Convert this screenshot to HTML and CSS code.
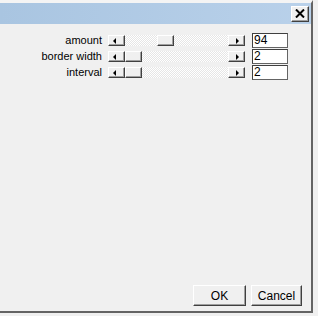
FILE: index.html
```html
<!DOCTYPE html>
<html lang="en">
  <head>
    <meta charset="utf-8" />
    <title>Settings</title>
    <link rel="stylesheet" href="styles.css">
  </head>
  <body>
    <div class="window">
      <div class="titlebar">
        <button class="close">
          <svg width="10" height="9" viewBox="0 0 10 9"><path d="M1 0.5 L9 8.5 M9 0.5 L1 8.5" stroke="#000" stroke-width="2"/></svg>
        </button>
      </div>

      <div class="content">
        <div class="rows">
          <label>amount</label>
          <div class="scroll">
            <span class="arrow left"></span>
            <span class="track"><span class="thumb" style="margin-left: 32px"></span></span>
            <span class="arrow right"></span>
          </div>
          <input type="text" value="94" />

          <label>border width</label>
          <div class="scroll">
            <span class="arrow left"></span>
            <span class="track"><span class="thumb"></span></span>
            <span class="arrow right"></span>
          </div>
          <input type="text" value="2" />

          <label>interval</label>
          <div class="scroll">
            <span class="arrow left"></span>
            <span class="track"><span class="thumb"></span></span>
            <span class="arrow right"></span>
          </div>
          <input type="text" value="2" />
        </div>
      </div>

      <div class="footer">
        <button class="btn ok">OK</button>
        <button class="btn">Cancel</button>
      </div>
    </div>
  </body>
</html>
```

FILE: styles.css
```css
body {
  margin: 0;
  background: #f0f0f0;
  font-family: "Liberation Sans", Arial, sans-serif;
  font-size: 11px;
}

.window {
  width: 313px;
  height: 313px;
  border-right: 2px solid #646464;
  border-bottom: 2px solid #646464;
  border-top: 3px solid #f4f4f4;
  box-sizing: border-box;
  display: flex;
  flex-direction: column;
  background: #f0f0f0;
}

.titlebar {
  height: 21px;
  background: linear-gradient(to right, #a9c5e1, #b9d1ea);
  display: flex;
  justify-content: flex-end;
  align-items: center;
  padding-right: 2px;
}

.close {
  width: 18px;
  height: 16px;
  padding: 0;
  background: #f0f0f0;
  border: 1px solid;
  border-color: #fff #404040 #404040 #fff;
  box-shadow: inset -1px -1px 0 #a0a0a0;
  display: flex;
  align-items: center;
  justify-content: center;
}

.content {
  flex: 1;
  padding-top: 9px;
}

.rows {
  display: grid;
  grid-template-columns: 102px 137px 36px;
  grid-auto-rows: 14px;
  column-gap: 6px;
  row-gap: 2px;
  align-items: center;
}

label {
  text-align: right;
  color: #000;
  line-height: 14px;
}

.scroll {
  display: flex;
  height: 11px;
}

.arrow,
.thumb {
  box-sizing: border-box;
  width: 17px;
  height: 11px;
  background: #f0f0f0;
  border: 1px solid;
  border-color: #fff #404040 #404040 #fff;
  box-shadow: inset -1px -1px 0 #a0a0a0;
  position: relative;
  flex: none;
}

.arrow::after {
  content: "";
  position: absolute;
  top: 2px;
  border: 3px solid transparent;
}

.arrow.left::after {
  left: 4px;
  border-right: 3px solid #000;
  border-left-width: 0;
}

.arrow.right::after {
  left: 7px;
  border-left: 3px solid #000;
  border-right-width: 0;
}

.track {
  flex: 1;
  display: flex;
  background-color: #fff;
  background-image: repeating-conic-gradient(#e6e6e6 0 25%, #fff 0 50%);
  background-size: 2px 2px;
}

input {
  box-sizing: border-box;
  width: 36px;
  height: 15px;
  margin: 0 0 0 1px;
  padding: 0 1px;
  font: inherit;
  font-size: 12px;
  line-height: 13px;
  border: 1px solid #646464;
  border-top-color: #404040;
  border-left-color: #404040;
  background: #fff;
  outline: none;
}

.footer {
  display: flex;
  justify-content: flex-end;
  gap: 5px;
  padding: 0 9px 5px 0;
}

.btn {
  box-sizing: border-box;
  height: 21px;
  padding: 0;
  font-family: "Liberation Sans", Arial, sans-serif;
  font-size: 12px;
  color: #000;
  background: #f0f0f0;
  border: 1px solid;
  border-color: #fff #404040 #404040 #fff;
  box-shadow: inset -1px -1px 0 #a0a0a0;
  width: 51px;
}

.btn.ok {
  width: 53px;
}
```
